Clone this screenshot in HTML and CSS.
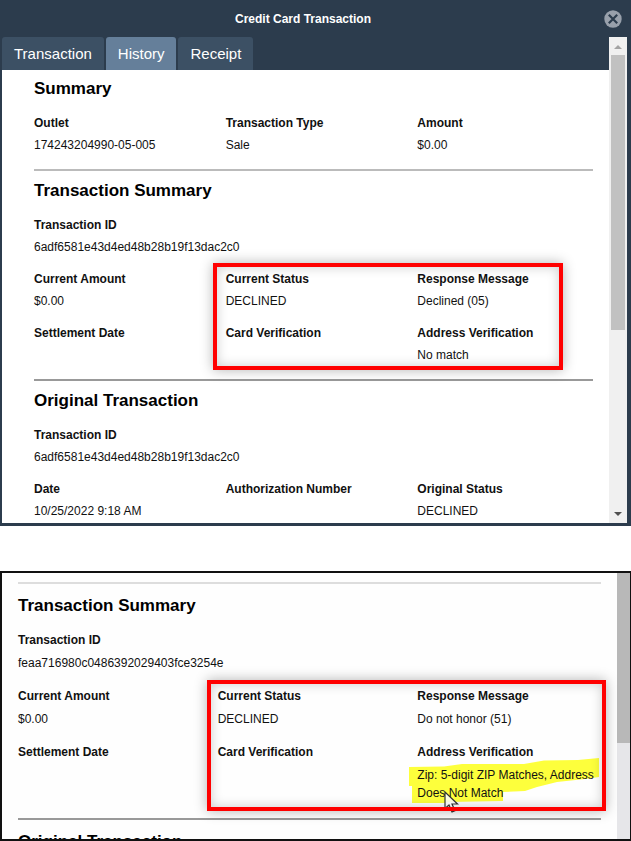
FILE: index.html
```html
<!DOCTYPE html>
<html lang="en">
<head>
    <meta charset="UTF-8">
    <meta name="viewport" content="width=device-width, initial-scale=1.0">
    <title>Credit Card Transaction</title>
    <link rel="stylesheet" href="styles.css">
</head>
<body>
    <section class="modal">
        <header class="modal-header">
            <h1>Credit Card Transaction</h1>
            <button type="button" class="close" aria-label="Close">
                <svg width="18" height="18" viewBox="0 0 18 18">
                    <circle cx="9" cy="9" r="8.7" fill="#98a0ab"/>
                    <path d="M4.8 4.8l8.4 8.4M13.2 4.8l-8.4 8.4" stroke="#2c3c4d" stroke-width="2.2"/>
                </svg>
            </button>
        </header>
        <div class="modal-body">
            <div class="modal-main">
                <nav class="tabs">
                    <button type="button">Transaction</button>
                    <button type="button" class="active">History</button>
                    <button type="button">Receipt</button>
                </nav>
                <div class="content">
                    <h2>Summary</h2>
                    <div class="fields">
                        <div class="field"><h3>Outlet</h3><p>174243204990-05-005</p></div>
                        <div class="field"><h3>Transaction Type</h3><p>Sale</p></div>
                        <div class="field"><h3>Amount</h3><p>$0.00</p></div>
                    </div>
                    <hr>
                    <h2>Transaction Summary</h2>
                    <div class="fields">
                        <div class="field wide"><h3>Transaction ID</h3><p>6adf6581e43d4ed48b28b19f13dac2c0</p></div>
                        <div class="field"><h3>Current Amount</h3><p>$0.00</p></div>
                        <div class="field"><h3>Current Status</h3><p>DECLINED</p></div>
                        <div class="field"><h3>Response Message</h3><p>Declined (05)</p></div>
                        <div class="field"><h3>Settlement Date</h3><p></p></div>
                        <div class="field"><h3>Card Verification</h3><p></p></div>
                        <div class="field"><h3>Address Verification</h3><p>No match</p></div>
                        <div class="callout"></div>
                    </div>
                    <hr class="dark">
                    <h2>Original Transaction</h2>
                    <div class="fields">
                        <div class="field wide"><h3>Transaction ID</h3><p>6adf6581e43d4ed48b28b19f13dac2c0</p></div>
                        <div class="field"><h3>Date</h3><p>10/25/2022 9:18 AM</p></div>
                        <div class="field"><h3>Authorization Number</h3><p></p></div>
                        <div class="field"><h3>Original Status</h3><p>DECLINED</p></div>
                    </div>
                </div>
            </div>
            <div class="scrollbar">
                <svg width="18" height="18" viewBox="0 0 18 18"><path d="M5 12l4-4 4 4z" fill="#a3a3a3"/></svg>
                <div class="track"><div class="thumb"></div></div>
                <svg width="18" height="18" viewBox="0 0 18 18"><path d="M5 7h8l-4 4z" fill="#505050"/></svg>
            </div>
        </div>
    </section>

    <section class="panel">
        <div class="content">
            <hr class="light">
            <h2>Transaction Summary</h2>
            <div class="fields">
                <div class="field wide"><h3>Transaction ID</h3><p>feaa716980c0486392029403fce3254e</p></div>
                <div class="field"><h3>Current Amount</h3><p>$0.00</p></div>
                <div class="field"><h3>Current Status</h3><p>DECLINED</p></div>
                <div class="field"><h3>Response Message</h3><p>Do not honor (51)</p></div>
                <div class="field"><h3>Settlement Date</h3><p></p></div>
                <div class="field"><h3>Card Verification</h3><p></p></div>
                <div class="field">
                    <h3>Address Verification</h3>
                    <p class="marked">
                        <svg class="marker" width="190" height="46" viewBox="0 0 190 46">
                            <path d="M0 10l35-.5 18-2.5h62l20-3.5 34-.5 21-2v19l-14 2-28 3-20 5-12 4-22 1v9l-55 1-10 2.5H3V29H0z" fill="#fdff3c"/>
                        </svg>
                        Zip: 5-digit ZIP Matches, Address Does Not Match
                        <svg class="cursor" width="16" height="23" viewBox="0 0 16 23">
                            <path d="M1 1v16.5l4-3.5 3 7 3-1.3-3-6.7h5.5z" fill="#fff" fill-opacity=".85" stroke="#333" stroke-width="1.2"/>
                        </svg>
                    </p>
                </div>
                <div class="callout"></div>
            </div>
            <hr class="dark">
            <h2>Original Transaction</h2>
        </div>
        <div class="scrollbar">
            <div class="thumb"></div>
        </div>
    </section>
</body>
</html>
```
FILE: styles.css
```css
:root {
    --navy: #2c3c4d;
    --tab: #3c5064;
    --tab-active: #657f9a;
    --red: #ff0000;
}

* {
    margin: 0;
    padding: 0;
    box-sizing: border-box;
}

body {
    height: 100vh;
    display: flex;
    flex-direction: column;
    gap: 45px;
    overflow: hidden;
    background: #fff;
    color: #111;
    font-family: "Liberation Sans", Arial, sans-serif;
    font-size: 12px;
    line-height: 22px;
}

button {
    border: none;
    background: none;
    font: inherit;
    cursor: pointer;
}

svg {
    display: block;
}

h1, h3 {
    font-size: 12px;
}

h2 {
    margin-bottom: 12px;
    font-size: 17px;
    color: #000;
}

hr {
    height: 2px;
    margin: 13px 0 9px;
    border: none;
    background: #bbb;
}

hr.dark {
    background: #999;
}

hr.light {
    background: #ddd;
}

/* modal window */
.modal {
    flex: none;
    padding: 0 4px 3px 2px;
    background: var(--navy);
}

.modal-header {
    display: flex;
    align-items: center;
    height: 37px;
    padding-right: 5px;
    color: #fff;
}

.modal-header h1 {
    flex: 1;
    text-align: center;
}

.modal-body {
    display: flex;
}

.modal-main {
    flex: 1;
}

.tabs {
    display: flex;
    gap: 2px;
}

.tabs button {
    height: 33px;
    padding: 0 12px;
    border-radius: 3px 3px 0 0;
    background: var(--tab);
    color: #fff;
    font-size: 15px;
}

.tabs .active {
    background: var(--tab-active);
}

.modal .content {
    padding: 8px 16px 1px 32px;
    background: #fff;
}

/* label and value grid */
.fields {
    display: grid;
    grid-template-columns: repeat(3, 1fr);
    gap: 10px 16px;
    position: relative;
}

.wide {
    grid-column: 1 / -1;
}

.field p {
    min-height: 22px;
}

.callout {
    position: absolute;
    grid-area: 2 / 2 / 4 / 4;
    inset: -5px 30px -4px -13px;
    border: 4px solid var(--red);
    box-shadow: 0 0 12px rgba(0, 0, 0, 0.3), inset 0 0 12px rgba(0, 0, 0, 0.2);
}

/* scrollbars */
.scrollbar {
    display: flex;
    flex-direction: column;
    width: 18px;
    background: #f0f0f0;
}

.track {
    flex: 1;
    padding: 0 2px;
}

.thumb {
    height: 61%;
    background: #c1c1c1;
}

/* lower panel */
.panel {
    flex: 1;
    min-height: 0;
    display: flex;
    overflow: hidden;
    border: 2px solid #111;
    border-right-width: 1px;
    background: #fefefe;
}

.panel .content {
    flex: 1;
    padding: 9px 16px 0;
}

.panel hr {
    margin: 16px 0 11px;
}

.panel hr.light {
    margin-top: 0;
}

.panel .fields {
    row-gap: 13px;
}

.panel .field p {
    min-height: 18px;
    margin-top: 3px;
    line-height: 18px;
}

.panel .callout {
    inset: -5px -5px -9px -11px;
}

.panel .scrollbar {
    width: 13px;
    background: #e6e6e9;
}

.panel .thumb {
    height: 64%;
    background: #b8b8b8;
}

.marked {
    position: relative;
    z-index: 0;
}

.marker {
    position: absolute;
    top: -9px;
    left: -8px;
    z-index: -1;
}

.cursor {
    position: absolute;
    top: 25px;
    left: 27px;
}
```
